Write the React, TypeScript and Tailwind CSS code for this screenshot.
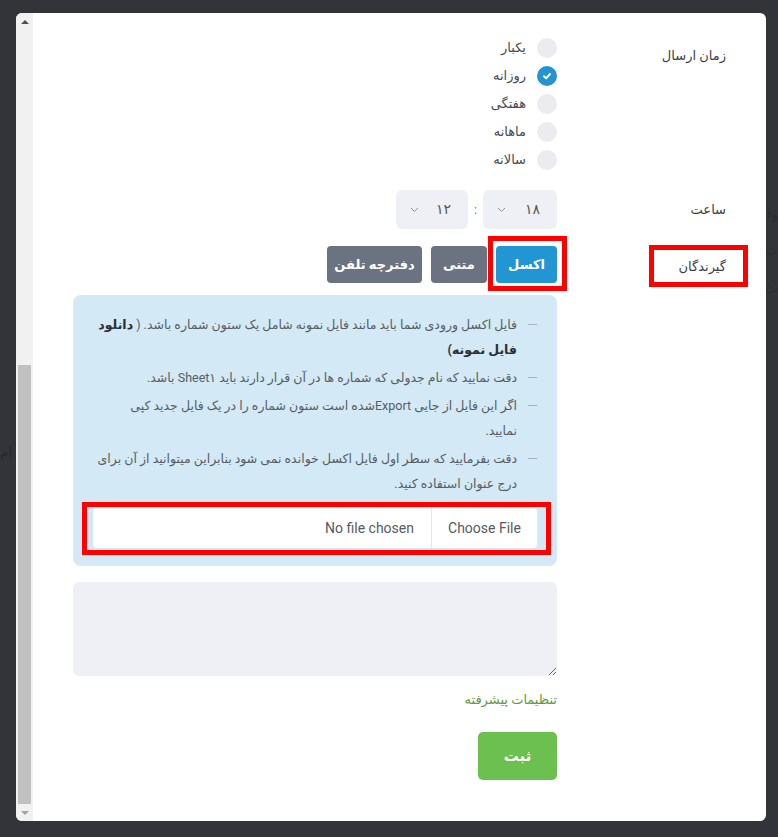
import React from "react";

const FA = { fontFamily: "Roboto, 'DejaVu Sans', sans-serif" };

function Check() {
  return (
    <svg width="10" height="10" viewBox="0 0 10 10" fill="none">
      <polyline points="2,5.2 4.2,7.3 8,3" stroke="#fff" strokeWidth="1.9" strokeLinecap="round" strokeLinejoin="round" />
    </svg>
  );
}

function Chevron() {
  return (
    <svg width="9" height="6" viewBox="0 0 9 6" fill="none">
      <polyline points="1,1 4.5,4.5 8,1" stroke="#8a8f99" strokeWidth="1" />
    </svg>
  );
}

function Radio({ label, checked }: { label: string; checked?: boolean }) {
  return (
    <div className="flex items-center h-[20px] gap-[11px]">
      <span
        className={
          "w-[20px] h-[20px] rounded-full flex items-center justify-center " +
          (checked ? "bg-[#2592d1]" : "bg-[#ececf0]")
        }
      >
        {checked && <Check />}
      </span>
      <span className="text-[13px] text-[#474b52] leading-[20px]">{label}</span>
    </div>
  );
}

function TimeSelect({ value, width }: { value: string; width: string }) {
  return (
    <div className={"h-[39px] rounded-[6px] bg-[#eff0f5] flex items-center justify-between pr-[17px] pl-[14px] " + width}>
      <span className="text-[14px] text-[#555]">{value}</span>
      <Chevron />
    </div>
  );
}

function Note({ children }: { children: React.ReactNode }) {
  return (
    <li className="flex gap-[11px] pr-[20px] pl-[14px]">
      <span className="w-[9px] h-[25px] shrink-0 flex items-center">
        <span className="w-[9px] h-px bg-[#a9b4bc]" />
      </span>
      <span className="flex-1 text-[12.5px] leading-[25px] text-[#585d64]">{children}</span>
    </li>
  );
}

export default function App() {
  return (
    <div className="relative w-[778px] h-[837px] bg-[#333439] overflow-hidden pt-[13px] pl-[16px]" style={FA}>
      {/* page behind the overlay */}
      <span className="absolute left-0 top-[442px] text-[14px] text-[#28292d]" dir="rtl">ام</span>
      <span className="absolute right-0 top-[204px] text-[14px] text-[#2b2c30]" dir="rtl">وا</span>
      <span className="absolute right-0 top-[240px] text-[14px] text-[#2b2c30]" dir="rtl">ب</span>
      <span className="absolute right-0 top-[278px] text-[14px] text-[#2b2c30]" dir="rtl">ت</span>

      <div className="relative w-[750px] h-[808px] bg-white rounded-[6px] overflow-hidden flex">
        {/* scrollbar */}
        <div className="w-[17px] h-full bg-[#f1f1f1] flex flex-col items-center">
          <div className="h-[17px] w-full flex items-center justify-center">
            <span className="w-0 h-0 border-l-[4px] border-r-[4px] border-b-[4px] border-l-transparent border-r-transparent border-b-[#505050]" />
          </div>
          <div className="flex-1" />
          <div className="w-[13px] h-[439px] bg-[#c1c1c1]" />
          <div className="h-[17px] w-full flex items-center justify-center">
            <span className="w-0 h-0 border-l-[4px] border-r-[4px] border-t-[4px] border-l-transparent border-r-transparent border-t-[#a3a3a3]" />
          </div>
        </div>

        {/* form */}
        <div dir="rtl" className="flex-1 px-[40px] pt-[25px]">
          {/* send time */}
          <div className="flex">
            <div className="w-[169px] pt-[8px] text-[13px] leading-[20px] text-[#3b3f45] font-medium">زمان ارسال</div>
            <div className="flex-1 flex flex-col gap-[8px]">
              <Radio label="یکبار" />
              <Radio label="روزانه" checked />
              <Radio label="هفتگی" />
              <Radio label="ماهانه" />
              <Radio label="سالانه" />
            </div>
          </div>

          {/* hour */}
          <div className="flex items-center mt-[20px]">
            <div className="w-[169px] text-[13px] text-[#3b3f45] font-medium">ساعت</div>
            <div className="flex-1 flex items-center">
              <TimeSelect value="۱۸" width="w-[74px]" />
              <span className="w-[15px] text-center text-[13px] text-[#777]">:</span>
              <TimeSelect value="۱۲" width="w-[72px]" />
            </div>
          </div>

          {/* recipients */}
          <div className="flex mt-[17px]">
            <div className="w-[169px]">
              <div className="relative h-[37px] flex items-center pt-[4px] text-[13px] text-[#3b3f45] font-medium">
                گیرندگان
                <span className="absolute right-[-22px] top-[-1px] w-[99px] h-[42px] border-[5px] border-[#ff0000]" />
              </div>
            </div>
            <div className="flex-1 flex flex-col">
              <div className="flex gap-[9px]">
                <div className="relative">
                  <button className="h-[37px] w-[61px] rounded-[4px] bg-[#2196d3] text-white text-[13px] font-bold">اکسل</button>
                  <span className="absolute top-[-10px] right-[-10px] bottom-[-8px] left-[-8px] border-[5px] border-[#ff0000]" />
                </div>
                <button className="h-[37px] w-[56px] rounded-[4px] bg-[#6b7280] text-white text-[13px] font-bold">متنی</button>
                <button className="h-[37px] w-[95px] rounded-[4px] bg-[#6b7280] text-white text-[13px] font-bold">دفترچه تلفن</button>
              </div>

              <div className="mt-[12px] rounded-[8px] bg-[#d3e9f5] pt-[17px] pb-[18px]">
                <ul className="flex flex-col gap-[3px]">
                  <Note>
                    فایل اکسل ورودی شما باید مانند فایل نمونه شامل یک ستون شماره باشد. ({" "}
                    <b className="text-[#2b2f36]">دانلود فایل نمونه)</b>
                  </Note>
                  <Note>دقت نمایید که نام جدولی که شماره ها در آن قرار دارند باید Sheet۱ باشد.</Note>
                  <Note>
                    اگر این فایل از جایی Exportشده است ستون شماره را در یک فایل جدید کپی
                    <br />
                    نمایید.
                  </Note>
                  <Note>دقت بفرمایید که سطر اول فایل اکسل خوانده نمی شود بنابراین میتوانید از آن برای درج عنوان استفاده کنید.</Note>
                </ul>
                <div className="relative mx-[20px] mt-[12px]">
                  <div className="h-[40px] rounded-[4px] bg-white flex items-center text-[14px] text-[#555a60]">
                    <div className="w-[106px] h-full flex items-center justify-center border-l border-[#e3e6ea]" dir="ltr">
                      Choose File
                    </div>
                    <div className="pr-[17px]" dir="ltr">No file chosen</div>
                  </div>
                  <span className="absolute top-[-6px] right-[-14px] bottom-[-7px] left-[-11px] border-[5px] border-[#ff0000]" />
                </div>
              </div>

              <textarea
                dir="ltr"
                readOnly
                className="mt-[16px] h-[94px] w-full rounded-[6px] bg-[#eff0f5] outline-none"
              />

              <div className="mt-[14px] text-[13px] leading-[20px] text-[#5f9a45]">تنظیمات پیشرفته</div>

              <div className="mt-[22px]">
                <button className="w-[79px] h-[48px] rounded-[5px] bg-[#6cc04f] text-white text-[15px] font-bold">ثبت</button>
              </div>
            </div>
          </div>
        </div>
      </div>
    </div>
  );
}
